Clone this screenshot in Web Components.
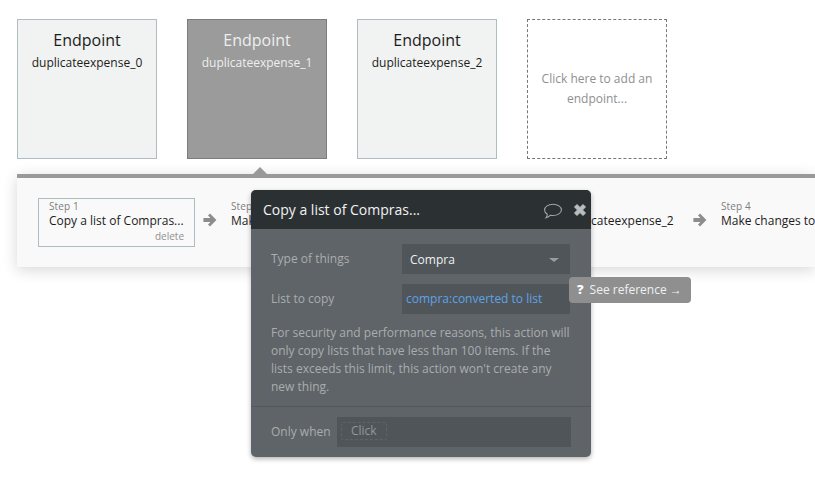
<!DOCTYPE html>
<html><head><meta charset="utf-8">
<style>
html,body{margin:0;padding:0;width:815px;height:498px;overflow:hidden;background:#fff;font-family:"Open Sans",sans-serif;}
</style></head>
<body>
<template id="t-card"><style>
:host{display:flex;flex-direction:column;align-items:center;box-sizing:border-box;width:140px;height:140px;flex:none;background:#f1f3f2;border:1px solid #adbdc2;color:#1c1c1c;padding-top:9px}
:host([active]){background:#9b9b9b;border-color:#7c7c7c;color:#eee}
:host([add]){background:#fff;border:1px dashed #777;color:#8f8f8f;justify-content:center;padding:0 8px;text-align:center;font-size:12px;line-height:20px}
:host([add]) .t,:host([add]) .s{display:none}
.t{font-size:16px;line-height:22px}.s{font-size:12px;line-height:22px;margin-top:1px}
</style><div class="t"><slot name="title"></slot></div><div class="s"><slot name="sub"></slot></div><slot></slot></template>

<template id="t-step"><style>
:host{display:block;box-sizing:border-box;flex:none;height:49px;padding:1px 10px 0 10px;border:1px solid transparent;white-space:nowrap;color:#1c1c1c}
:host([selected]){border-color:#adbdc2}
.n{font-size:10px;line-height:12px;color:#7d7d7d;letter-spacing:.1px}
.l{font-size:12px;line-height:17px}
.d{font-size:10px;line-height:14px;color:#8f8f8f;text-align:right;display:none}
:host([selected]) .d{display:block}
</style><div class="n"><slot name="n"></slot></div><div class="l"><slot></slot></div><div class="d">delete</div></template>

<template id="t-arrow"><style>
:host{display:flex;align-items:center;flex:none;width:14px;height:14px;margin-right:-5px}
svg{display:block}
</style><svg width="14" height="14" viewBox="0 0 14 14"><path d="M7 .6 13.400 7 7 13.400 5 11.400 7.500 9H.4V5H7.500L5 2.600Z" fill="#8c8c8c"/></svg></template>

<template id="t-row"><style>
:host{display:flex;align-items:center;height:30px;font-size:12px;color:#a9adaf}
.lab{width:131px;flex:none;margin-top:-1px}
.box{box-sizing:border-box;width:168px;height:30px;background:#50555a;display:flex;align-items:center;position:relative}
:host([dropdown]) .box{color:#eef0f0;padding-left:8px}
:host(:not([dropdown])) .box{color:#5ea3e6;padding-left:4px;padding-bottom:2px}
.caret{display:none;position:absolute;right:11px;top:14px;width:0;height:0;border-left:5px solid transparent;border-right:5px solid transparent;border-top:4px solid #9a9ea1}
:host([dropdown]) .caret{display:block}
</style><div class="lab"><slot name="label"></slot></div><div class="box"><slot></slot><span class="caret"></span></div></template>

<template id="t-popup"><style>
:host{position:absolute;left:251px;top:190px;width:340px;height:267px;display:flex;flex-direction:column;background:#5f6468;border-radius:5px;box-shadow:0 2px 5px rgba(0,0,0,.3);overflow:hidden;color:#a9adaf;font-size:12px}
header{height:39px;flex:none;box-sizing:border-box;background:#2b3133;color:#f2f2f2;font-size:14px;display:flex;align-items:center;padding:0 4px 0 12px}
header .ti{flex:1}
header svg{display:block}
.c{margin-right:10px;margin-top:3px}.x{margin-right:0;margin-top:1px}
.body{padding:15px 20px 0;display:flex;flex-direction:column;gap:10px;flex:none}
.desc{margin:0;line-height:18px;color:#a9adaf}
.foot{margin-top:10px;border-top:1px solid #53585c;display:flex;align-items:center;padding:10px 20px 0;flex:none}
.w{width:66px;flex:none;margin-top:-2px}
.in{box-sizing:border-box;width:234px;height:30px;background:#50555a;display:flex;align-items:center;padding:0 0 2px 4px}
.ck{border:1px dashed #5f6468;border-radius:2px;padding:0 9px;line-height:16px;color:#92979a}
</style>
<header><span class="ti"><slot name="title"></slot></span>
<svg class="c" width="20" height="17" viewBox="0 0 20 17"><path d="M10 1.300c4.600 0 8.400 2.400 8.400 5.600s-3.800 5.600-8.400 5.600c-.9 0-1.700-.1-2.500-.3-.9.9-2.400 2-4.500 2.600.7-.9 1.200-1.900 1.300-3.600C2.700 10.200 1.600 8.700 1.600 6.900 1.600 3.700 5.400 1.300 10 1.300Z" fill="none" stroke="#9fa5a6" stroke-width="1.100"/></svg>
<svg class="x" width="14" height="14" viewBox="0 0 14 14"><path d="M1.500 4 4 1.500 7 4.500 10 1.500 12.500 4 9.500 7 12.500 10 10 12.500 7 9.500 4 12.500 1.500 10 4.500 7Z" fill="#b9bfc0" stroke="#b9bfc0" stroke-width="1" stroke-linejoin="round"/></svg></header>
<div class="body"><slot name="rows"></slot><p class="desc"><slot name="desc"></slot></p></div>
<div class="foot"><span class="w">Only when</span><div class="in"><span class="ck">Click</span></div></div>
</template>

<template id="t-tip"><style>
:host{position:absolute;left:569px;top:277px;box-sizing:border-box;width:122px;height:26px;background:#8f8f8f;border-radius:4px;color:#f0f0f0;font-size:12px;display:flex;align-items:center;padding-left:8px;padding-bottom:2px;white-space:nowrap}
b{font-weight:800;margin-right:6px;font-size:13px;color:#fff}
</style><b>?</b><span><slot></slot></span></template>

<template id="t-panel"><style>
:host{display:block;position:relative;margin-left:17px;height:93px;box-sizing:border-box;border-top:4px solid #999;background:#f9f9f9;box-shadow:0 3px 14px rgba(0,0,0,.16)}
.row{display:flex;padding:20px 0 0 21px;gap:8px;align-items:flex-start;white-space:nowrap;width:900px}
::slotted(x-arrow){margin-top:15px}
.tick{position:absolute;left:236px;top:-11px;width:0;height:0;border-left:7px solid transparent;border-right:7px solid transparent;border-bottom:7px solid #999}
</style><span class="tick"></span><div class="row"><slot></slot></div></template>

<template id="t-app"><style>
:host{display:block;padding-top:19px}
.cards{display:flex;gap:30px;padding-left:17px;margin-bottom:15px}
</style><div class="cards"><slot name="cards"></slot></div><slot></slot></template>

<x-app>
  <x-card slot="cards"><span slot="title">Endpoint</span><span slot="sub">duplicateexpense_0</span></x-card>
  <x-card slot="cards" active><span slot="title">Endpoint</span><span slot="sub">duplicateexpense_1</span></x-card>
  <x-card slot="cards"><span slot="title">Endpoint</span><span slot="sub">duplicateexpense_2</span></x-card>
  <x-card slot="cards" add>Click here to add an endpoint...</x-card>
  <x-panel>
    <x-step selected style="width:157px"><span slot="n">Step 1</span>Copy a list of Compras...</x-step>
    <x-arrow></x-arrow>
    <x-step style="width:253px"><span slot="n">Step 2</span>Make changes to a list...</x-step>
    <x-arrow></x-arrow>
    <x-step style="width:187px"><span slot="n">Step 3</span>Schedule duplicateexpense_2</x-step>
    <x-arrow></x-arrow>
    <x-step><span slot="n">Step 4</span>Make changes to a thing...</x-step>
  </x-panel>
</x-app>
<x-popup>
  <span slot="title">Copy a list of Compras...</span>
  <x-row slot="rows" dropdown><span slot="label">Type of things</span>Compra</x-row>
  <x-row slot="rows"><span slot="label">List to copy</span>compra:converted to list</x-row>
  <span slot="desc">For security and performance reasons, this action will only copy lists that have less than 100 items. If the lists exceeds this limit, this action won't create any new thing.</span>
</x-popup>
<x-tip>See reference <span style="font-family:'Liberation Sans',sans-serif">→</span></x-tip>
<script>
for (const [n,t] of [['x-card','t-card'],['x-step','t-step'],['x-arrow','t-arrow'],['x-row','t-row'],['x-popup','t-popup'],['x-tip','t-tip'],['x-panel','t-panel'],['x-app','t-app']]) {
  customElements.define(n, class extends HTMLElement {
    constructor(){super();this.attachShadow({mode:'open'}).appendChild(document.getElementById(t).content.cloneNode(true));}
  });
}
</script>
</body></html>
